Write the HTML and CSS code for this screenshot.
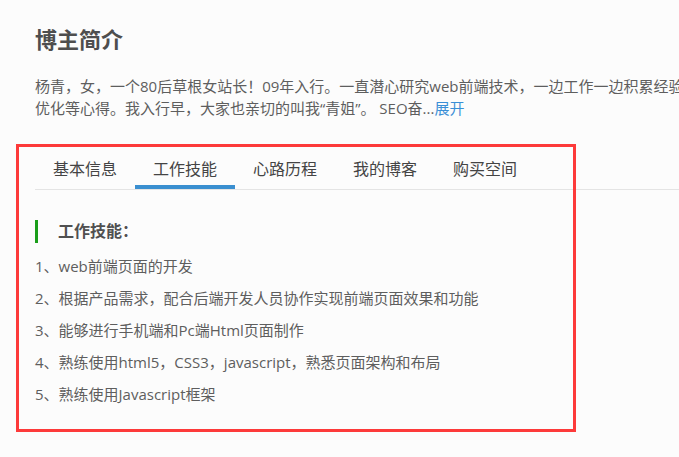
FILE: index.html
```html
<!DOCTYPE html>
<html lang="zh-CN">
<head>
<meta charset="utf-8">
<title>博主简介</title>
<link rel="stylesheet" href="styles.css">
</head>
<body>
<div class="main">
  <h2 class="title">博主简介</h2>
  <p class="intro">杨青，女，一个80后草根女站长！09年入行。一直潜心研究web前端技术，一边工作一边积累经验，分享一些个人博客模板，以及SEO<br>优化等心得。我入行早，大家也亲切的叫我“青姐”。 SEO奋...<a class="more" href="#">展开</a></p>
  <div class="panel">
    <ul class="tabs">
      <li class="tab">基本信息</li>
      <li class="tab active">工作技能</li>
      <li class="tab">心路历程</li>
      <li class="tab">我的博客</li>
      <li class="tab">购买空间</li>
    </ul>
    <div class="tab-body">
      <h3 class="sub-title">工作技能：</h3>
      <p class="item">1、web前端页面的开发</p>
      <p class="item">2、根据产品需求，配合后端开发人员协作实现前端页面效果和功能</p>
      <p class="item">3、能够进行手机端和Pc端Html页面制作</p>
      <p class="item">4、熟练使用html5，CSS3，javascript，熟悉页面架构和布局</p>
      <p class="item">5、熟练使用Javascript框架</p>
    </div>
    <div class="highlight"></div>
  </div>
</div>
</body>
</html>
```

FILE: styles.css
```css
html {
  overflow: hidden;
  background: #fcfcfc;
}

body {
  margin: 0;
  padding: 0;
  min-height: 457px;
  font-family: "Open Sans", "Noto Sans CJK SC", sans-serif;
  color: #5e5e5e;
}

.main {
  width: 1000px;
  padding: 24px 0 0 35px;
}

.title {
  margin: 0;
  font-size: 22px;
  line-height: 30px;
  font-weight: bold;
  color: #4e4e4e;
}

.intro {
  margin: 21px 0 0;
  font-size: 15px;
  line-height: 22px;
  color: #5e5e5e;
}

.more {
  color: #3a8fd6;
  text-decoration: none;
}

.panel {
  position: relative;
  margin-top: 34px;
}

.tabs {
  display: flex;
  margin: 0;
  padding: 0;
  list-style: none;
  border-bottom: 1px solid #e4e4e4;
}

.tab {
  width: 100px;
  text-align: center;
  font-size: 16px;
  line-height: 32px;
  color: #444;
  border-bottom: 4px solid transparent;
}

.tab.active {
  border-bottom-color: #3a8fd0;
}

.tab-body {
  padding-top: 30px;
}

.sub-title {
  margin: 0 0 7px;
  padding-left: 20px;
  border-left: 3px solid #1a9e1a;
  font-size: 16px;
  line-height: 23px;
  font-weight: bold;
  color: #505050;
}

.item {
  margin: 0;
  font-size: 15px;
  line-height: 32px;
  color: #5e5e5e;
}

.highlight {
  position: absolute;
  left: -19px;
  top: -9px;
  width: 560px;
  height: 288px;
  box-sizing: border-box;
  border: 3px solid #fd3a3a;
  pointer-events: none;
}
```
